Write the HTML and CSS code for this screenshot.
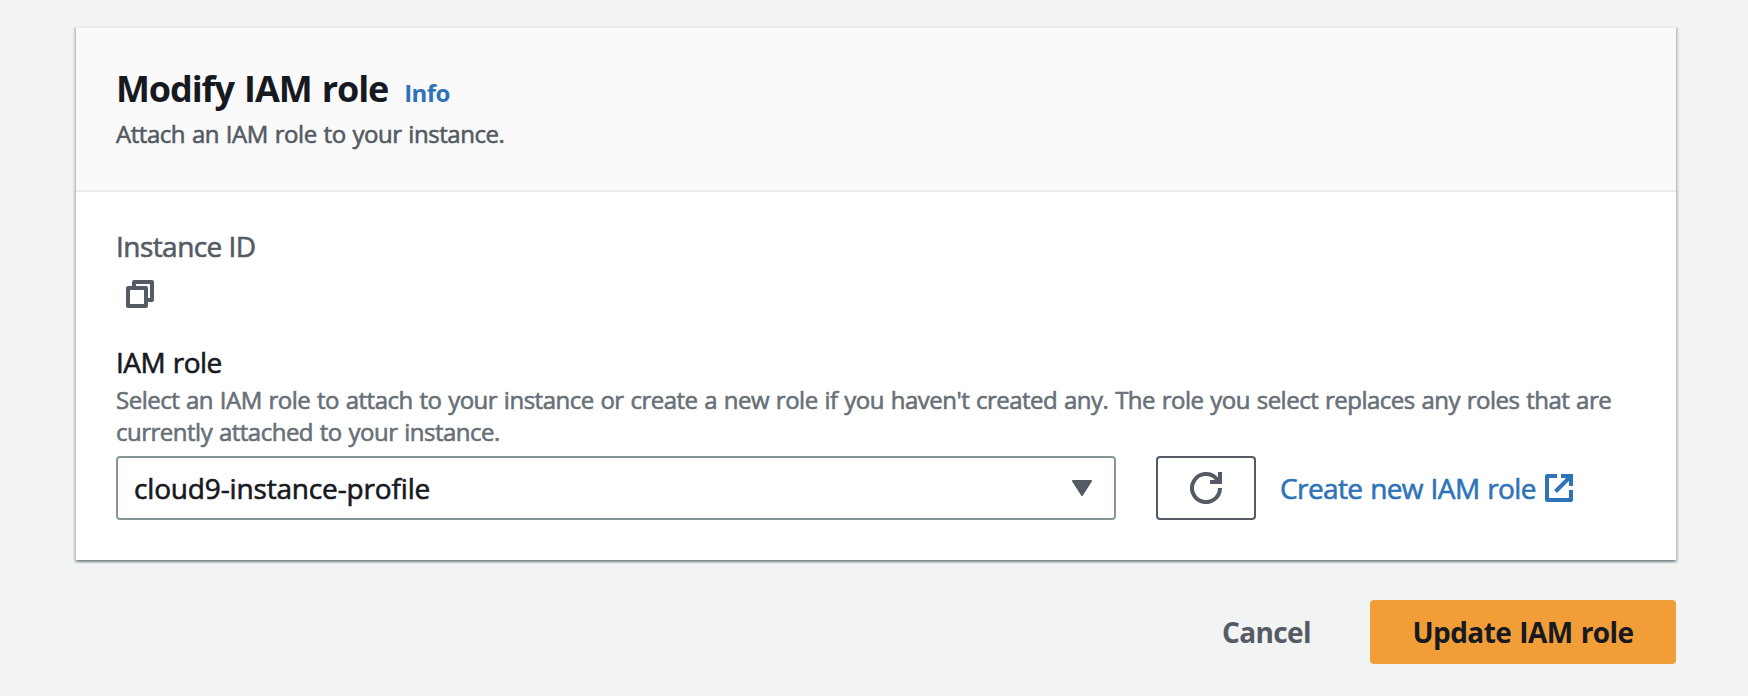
FILE: index.html
```html
<!DOCTYPE html>
<html lang="en">
<head>
<meta charset="utf-8">
<title>Modify IAM role</title>
<link rel="stylesheet" href="styles.css">
</head>
<body>
<main class="page">
  <section class="card">
    <header class="card-header">
      <div class="title-row">
        <h1 class="title">Modify IAM role</h1>
        <a class="info">Info</a>
      </div>
      <p class="subtitle">Attach an IAM role to your instance.</p>
    </header>
    <div class="card-body">
      <div class="label instance-label">Instance ID</div>
      <svg class="copy-icon" width="28" height="28" viewBox="0 0 28 28" fill="none" stroke="currentColor" stroke-width="4" stroke-linejoin="round"><path d="M2 8h18v18H2z"/><path d="M8 8V2h18v18h-6"/></svg>
      <div class="label role-label">IAM role</div>
      <p class="hint">Select an IAM role to attach to your instance or create a new role if you haven't created any. The role you select replaces any roles that are<br>currently attached to your instance.</p>
      <div class="controls">
        <div class="select">
          <span class="select-value">cloud9-instance-profile</span>
          <svg width="20" height="16" viewBox="0 0 20 16" fill="currentColor" stroke="currentColor" stroke-width="2" stroke-linejoin="round"><path d="M1 1h18l-9 14z"/></svg>
        </div>
        <button class="refresh" aria-label="Refresh"><svg width="32" height="32" viewBox="0 0 32 32" fill="none" stroke="currentColor" stroke-width="4"><path d="M30 16A14 14 0 1 1 26.500 6.800L29 10"/><path d="M20 10h10V0"/></svg></button>
        <a class="create"><span class="create-text">Create new IAM role</span><svg width="28" height="28" viewBox="0 0 28 28" fill="none" stroke="currentColor" stroke-width="4" stroke-linejoin="round"><path d="M12 2H2v24h24V16"/><path d="M16 2h10v10M26 2L10.500 17.500" stroke-linejoin="miter"/></svg></a>
      </div>
    </div>
  </section>
  <footer class="actions">
    <button class="cancel">Cancel</button>
    <button class="update">Update IAM role</button>
  </footer>
</main>
</body>
</html>
```
FILE: styles.css
```css
* { box-sizing: border-box; }
body {
  margin: 0;
  background: #f2f3f3;
  font-family: "Open Sans", "Noto Sans", sans-serif;
  font-size: 28px;
  font-weight: 500;
  color: #16191f;
}
h1, p { margin: 0; }
svg { display: block; flex: none; }
button { font: inherit; letter-spacing: inherit; word-spacing: inherit; margin: 0; padding: 0; border: 0; background: none; }
.page { height: 696px; padding: 26px 72px 0 76px; white-space: nowrap; overflow: hidden; }
.card {
  width: 1600px;
  height: 534px;
  background: #fff;
  border-top: 2px solid #eaeded;
  box-shadow: 0 2px 2px rgba(0, 28, 36, .3), 2px 2px 2px rgba(0, 28, 36, .15), -2px 2px 2px rgba(0, 28, 36, .15);
}
.card-header { height: 164px; padding: 39px 40px 0; background: #fafafa; border-bottom: 2px solid #eaeded; }
.title-row { display: flex; align-items: baseline; gap: 16px; height: 49px; line-height: 44px; }
.title { font-size: 36px; font-weight: 700; line-height: 44px; letter-spacing: -1.1px; word-spacing: 2px; }
.info { font-size: 24px; font-weight: 700; letter-spacing: -.6px; color: #2e73b8; }
.subtitle, .label, .hint, .select-value, .create-text { -webkit-text-stroke: .6px currentColor; }
.subtitle { font-size: 24px; line-height: 36px; letter-spacing: -.45px; word-spacing: 1px; color: #545b64; }
.card-body { padding: 34px 40px 0; }
.label { line-height: 40px; letter-spacing: -.55px; }
.instance-label { color: #545b64; }
.role-label { word-spacing: 1px; }
.copy-icon { margin: 14px 0 0 10px; color: #545b64; }
.role-label { margin-top: 34px; }
.hint { margin-top: 2px; font-size: 24px; line-height: 32px; letter-spacing: -.5px; word-spacing: 1px; color: #687078; }
.controls { display: flex; align-items: center; margin-top: 8px; }
.select { display: flex; align-items: center; justify-content: space-between; width: 1000px; height: 64px; padding: 0 22px 0 16px; border: 2px solid #879596; border-radius: 4px; }
.select-value { letter-spacing: -.16px; }
.select svg { color: #545b64; }
.refresh { display: flex; align-items: center; justify-content: center; width: 100px; height: 64px; margin-left: 40px; border: 2px solid #545b64; border-radius: 4px; color: #545b64; }
.create { display: flex; align-items: center; margin-left: 24px; color: #2e73b8; }
.create-text { width: 265px; letter-spacing: -.6px; word-spacing: 1px; }
.actions { display: flex; justify-content: flex-end; width: 1600px; margin-top: 40px; font-weight: 700; letter-spacing: -.6px; word-spacing: 1.5px; }
.cancel { width: 167px; color: #545b64; }
.update { width: 306px; height: 64px; margin-left: 20px; background: #f19e38; border-radius: 4px; color: #16191f; }
```
